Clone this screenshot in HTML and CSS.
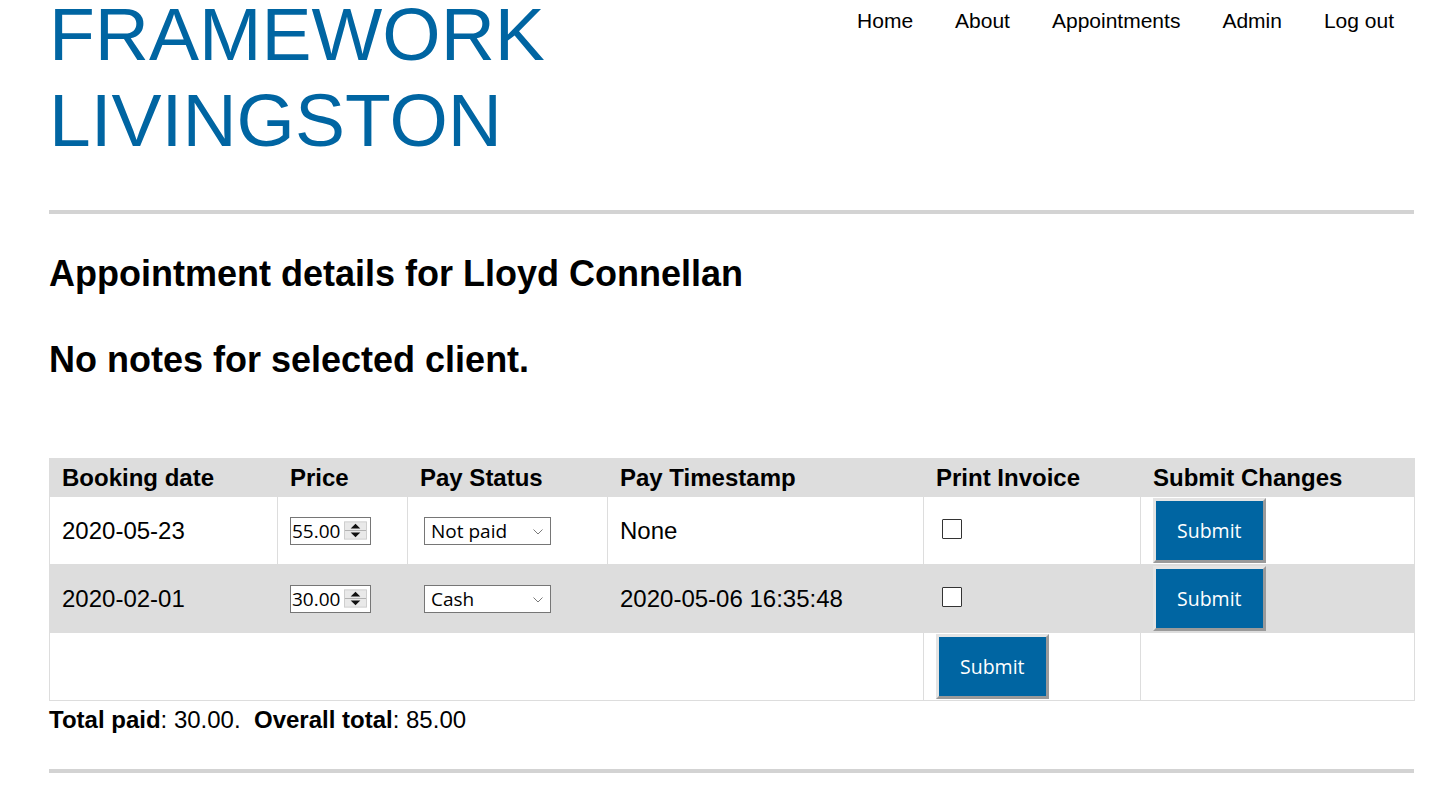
FILE: index.html
```html
<!DOCTYPE html>
<html lang="en">
<head>
<meta charset="utf-8">
<title>Appointment details</title>
<link rel="stylesheet" href="styles.css">
</head>
<body>
<div class="page">
  <header class="top">
    <h1 class="brand">FRAMEWORK LIVINGSTON</h1>
    <nav class="nav">
      <a href="#">Home</a>
      <a href="#">About</a>
      <a href="#">Appointments</a>
      <a href="#">Admin</a>
      <a href="#">Log out</a>
    </nav>
  </header>
  <hr class="rule">
  <h2 class="heading">Appointment details for Lloyd Connellan</h2>
  <h2 class="heading notes">No notes for selected client.</h2>

  <table class="appts">
    <colgroup>
      <col class="c1"><col class="c2"><col class="c3"><col class="c4"><col class="c5"><col class="c6">
    </colgroup>
    <thead>
      <tr>
        <th>Booking date</th>
        <th>Price</th>
        <th>Pay Status</th>
        <th>Pay Timestamp</th>
        <th>Print Invoice</th>
        <th>Submit Changes</th>
      </tr>
    </thead>
    <tbody>
      <tr>
        <td>2020-05-23</td>
        <td>
          <span class="num"><input class="num-field" type="text" value="55.00"><svg class="spin" width="24" height="19" viewBox="0 0 24 19"><rect x="0.5" y="0.5" width="23" height="18" fill="#e9e9e9" stroke="#cdcdcd"/><line x1="1" y1="9.5" x2="23" y2="9.5" stroke="#b0b0b0"/><polygon points="7,7.5 17,7.5 12,2.5" fill="#111"/><polygon points="7,11.5 17,11.5 12,16.5" fill="#111"/></svg></span>
        </td>
        <td>
          <span class="sel"><select><option selected>Not paid</option><option>Cash</option><option>Card</option></select><svg class="chev" width="10" height="6" viewBox="0 0 10 6"><polyline points="0.5,0.5 5,5 9.5,0.5" fill="none" stroke="#7a7a7a" stroke-width="1"/></svg></span>
        </td>
        <td>None</td>
        <td><input class="check" type="checkbox"></td>
        <td><button class="btn" type="button">Submit</button></td>
      </tr>
      <tr class="alt">
        <td>2020-02-01</td>
        <td>
          <span class="num"><input class="num-field" type="text" value="30.00"><svg class="spin" width="24" height="19" viewBox="0 0 24 19"><rect x="0.5" y="0.5" width="23" height="18" fill="#e9e9e9" stroke="#cdcdcd"/><line x1="1" y1="9.5" x2="23" y2="9.5" stroke="#b0b0b0"/><polygon points="7,7.5 17,7.5 12,2.5" fill="#111"/><polygon points="7,11.5 17,11.5 12,16.5" fill="#111"/></svg></span>
        </td>
        <td>
          <span class="sel"><select><option>Not paid</option><option selected>Cash</option><option>Card</option></select><svg class="chev" width="10" height="6" viewBox="0 0 10 6"><polyline points="0.5,0.5 5,5 9.5,0.5" fill="none" stroke="#7a7a7a" stroke-width="1"/></svg></span>
        </td>
        <td>2020-05-06 16:35:48</td>
        <td><input class="check" type="checkbox"></td>
        <td><button class="btn" type="button">Submit</button></td>
      </tr>
      <tr>
        <td colspan="4"></td>
        <td><button class="btn" type="button">Submit</button></td>
        <td></td>
      </tr>
    </tbody>
  </table>

  <p class="totals"><b>Total paid</b>: 30.00.&nbsp; <b>Overall total</b>: 85.00</p>
  <hr class="rule rule-bottom">
</div>
</body>
</html>
```

FILE: styles.css
```css
body {
  margin: 0;
  font-family: "Liberation Sans", Arial, sans-serif;
  font-size: 24px;
  color: #000;
  background: #fff;
}

.page {
  padding: 0 32px 0 49px;
}

.top {
  display: flex;
  justify-content: space-between;
  align-items: flex-start;
}

.brand {
  margin: -9px 0 0;
  font-size: 75px;
  font-weight: normal;
  line-height: normal;
  color: #0065a2;
}

.nav {
  display: flex;
  padding-top: 9px;
  margin-right: -1px;
  flex-shrink: 0;
}

.nav a {
  font-size: 21px;
  color: #000;
  text-decoration: none;
  padding: 0 21px;
}

.rule {
  border: 0;
  height: 4px;
  background: #d3d3d3;
  margin: 47px 0 0;
}

.heading {
  font-size: 36px;
  font-weight: bold;
  line-height: normal;
  margin: 39px 0 0;
}

.notes {
  margin-top: 44px;
}

.appts {
  margin-top: 77px;
  width: 100%;
  border-collapse: collapse;
  table-layout: fixed;
}

.c1 { width: 228px; }
.c2 { width: 130px; }
.c3 { width: 200px; }
.c4 { width: 316px; }
.c5 { width: 217px; }
.c6 { width: 274px; }

.appts th {
  background: #dddddd;
  border: 1px solid #dddddd;
  text-align: left;
  font-size: 24px;
  font-weight: bold;
  line-height: 27px;
  padding: 5px 12px;
}

.appts td {
  border: 1px solid #dddddd;
  padding: 1px 12px;
  height: 66px;
  box-sizing: border-box;
  vertical-align: middle;
  font-size: 24px;
}

.appts tr.alt td {
  background: #dddddd;
}

.num {
  display: inline-flex;
  align-items: center;
  box-sizing: border-box;
  width: 81px;
  height: 28px;
  border: 1px solid #767676;
  background: #fff;
  vertical-align: middle;
}

.num-field {
  width: 52px;
  border: 0;
  padding: 0 0 0 1px;
  margin: 0;
  font-family: "Open Sans", sans-serif;
  font-size: 19px;
  color: #000;
  background: transparent;
  outline: none;
}

.spin {
  display: block;
  margin: -1px 3px 0 auto;
}

.sel {
  position: relative;
  display: inline-block;
  margin-left: 4px;
  vertical-align: middle;
}

.sel select {
  appearance: none;
  -webkit-appearance: none;
  display: block;
  box-sizing: border-box;
  width: 127px;
  height: 28px;
  border: 1px solid #767676;
  border-radius: 0;
  background: #fff;
  padding: 0 0 0 6px;
  font-family: "Open Sans", sans-serif;
  font-size: 19px;
  color: #000;
}

.chev {
  position: absolute;
  right: 8px;
  top: 12px;
  pointer-events: none;
}

.check {
  appearance: none;
  -webkit-appearance: none;
  display: block;
  box-sizing: border-box;
  width: 20px;
  height: 20px;
  margin: 0 0 4px 6px;
  border: 1px solid #333;
  border-radius: 1px;
  background: #fff;
}

.btn {
  box-sizing: border-box;
  height: 65px;
  padding: 0 21px;
  background: #0065a2;
  color: #fff;
  font-family: "Open Sans", sans-serif;
  font-size: 19.5px;
  border-width: 3px;
  border-style: solid;
  border-color: #e4e4e4 #9a9a9a #9a9a9a #e4e4e4;
  display: block;
}

.totals {
  margin: 5px 0 0;
  font-size: 24px;
  line-height: normal;
}

.rule-bottom {
  margin-top: 35px;
}
```
